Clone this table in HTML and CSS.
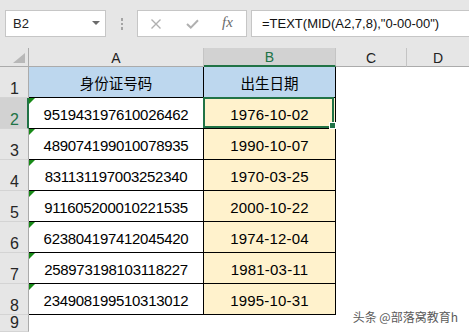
FILE: index.html
```html
<!DOCTYPE html>
<html lang="zh-CN">
<head>
<meta charset="utf-8">
<title>Excel TEXT MID</title>
<link rel="stylesheet" href="styles.css">
</head>
<body>
<div class="app">
  <div class="toolbar">
    <div class="namebox"><span class="ref">B2</span><span class="caret"></span></div>
    <div class="grip"><i></i><i></i><i></i></div>
    <div class="fxbox">
      <svg class="ico-x" width="12" height="10" viewBox="0 0 12 10"><path d="M1.5 0.5 L10.5 9.5 M10.5 0.5 L1.5 9.5" stroke="#b0b0b0" stroke-width="1.4" fill="none"/></svg>
      <svg class="ico-ok" width="13" height="10" viewBox="0 0 13 10"><path d="M1 5 L4.8 8.6 L12 1.2" stroke="#b0b0b0" stroke-width="2" fill="none"/></svg>
      <span class="fx">fx</span>
    </div>
    <div class="formula">=TEXT(MID(A2,7,8),"0-00-00")</div>
  </div>

  <div class="sheet">
    <div class="corner"><svg width="12" height="10" viewBox="0 0 12 10"><polygon points="12,0 12,10 0,10" fill="#b8b8b8"/></svg></div>
    <div class="colhead">A</div>
    <div class="colhead sel">B</div>
    <div class="colhead">C</div>
    <div class="colhead last">D</div>

    <div class="rowhead">1</div>
    <div class="cell title">身份证号码</div>
    <div class="cell title">出生日期</div>
    <div class="blank"></div><div class="blank"></div>

    <div class="rowhead sel">2</div>
    <div class="cell id flag">951943197610026462</div>
    <div class="cell date active">1976-10-02<span class="selbox"><span class="handle"></span></span></div>
    <div class="blank"></div><div class="blank"></div>

    <div class="rowhead">3</div>
    <div class="cell id flag">489074199010078935</div>
    <div class="cell date">1990-10-07</div>
    <div class="blank"></div><div class="blank"></div>

    <div class="rowhead">4</div>
    <div class="cell id flag">831131197003252340</div>
    <div class="cell date">1970-03-25</div>
    <div class="blank"></div><div class="blank"></div>

    <div class="rowhead">5</div>
    <div class="cell id flag">911605200010221535</div>
    <div class="cell date">2000-10-22</div>
    <div class="blank"></div><div class="blank"></div>

    <div class="rowhead">6</div>
    <div class="cell id flag">623804197412045420</div>
    <div class="cell date">1974-12-04</div>
    <div class="blank"></div><div class="blank"></div>

    <div class="rowhead">7</div>
    <div class="cell id flag">258973198103118227</div>
    <div class="cell date">1981-03-11</div>
    <div class="blank"></div><div class="blank"></div>

    <div class="rowhead">8</div>
    <div class="cell id flag">234908199510313012</div>
    <div class="cell date">1995-10-31</div>
    <div class="blank"></div><div class="blank"></div>

    <div class="rowhead">9</div>
    <div class="blank"></div><div class="blank"></div><div class="blank"></div><div class="blank"></div>
  </div>

  <div class="watermark">头条 @部落窝教育h</div>
</div>
</body>
</html>
```

FILE: styles.css
```css
* { box-sizing: border-box; }
html, body { margin: 0; padding: 0; background: #fff; }
body { width: 469px; height: 332px; overflow: hidden; font-family: "Liberation Sans", Arial, "Noto Sans CJK SC", sans-serif; }

.app { position: relative; width: 469px; height: 332px; display: flex; flex-direction: column; }

.toolbar {
  height: 48px;
  flex: none;
  background: #e6e6e6;
  display: flex;
  align-items: flex-start;
  padding: 10px 0 0 5px;
}
.namebox {
  width: 101px; height: 27px;
  background: #fff;
  border: 1px solid #c6c6c6;
  display: flex; align-items: center; justify-content: space-between;
  padding: 0 5px 0 7px;
}
.ref { font-size: 13px; color: #222; line-height: 25px; }
.caret { width: 0; height: 0; border-left: 4px solid transparent; border-right: 4px solid transparent; border-top: 4px solid #6b6b6b; margin-top: -2px; }

.grip { width: 31px; height: 27px; display: flex; flex-direction: column; align-items: center; padding-top: 8px; gap: 2px; }
.grip i { display: block; width: 2px; height: 2.5px; background: #a4a4a4; }

.fxbox {
  width: 110px; height: 27px;
  background: #fff;
  border: 1px solid #c6c6c6;
  display: flex; align-items: center;
  padding-left: 12px;
}
.ico-x { flex: none; }
.ico-ok { flex: none; margin-left: 24px; margin-top: 1px; }
.fx { margin-left: 23px; font-family: "Liberation Serif", "Times New Roman", serif; font-style: italic; font-size: 15px; color: #6a6a6a; line-height: 25px; margin-top: -2px; }

.formula {
  flex: 1;
  margin-left: 4px;
  height: 27px;
  background: #fff;
  border: 1px solid #c6c6c6;
  border-right: none;
  padding-left: 10px;
  font-size: 13px; line-height: 25px; color: #111;
  white-space: nowrap;
}

.sheet {
  flex: 1;
  display: grid;
  grid-template-columns: 29px 175px 132px 71px 1fr;
  grid-template-rows: 19px repeat(8, 31px) 1fr;
  overflow: hidden;
}

.corner {
  background: #e6e6e6;
  border-right: 1px solid #ababab;
  border-bottom: 1px solid #ababab;
  display: flex; align-items: flex-end; justify-content: flex-end;
  padding: 0 3px 3px 0;
}
.corner svg { display: block; }

.colhead {
  background: #e6e6e6;
  border-right: 1px solid #c4c4c4;
  border-bottom: 1px solid #ababab;
  display: flex; align-items: flex-end; justify-content: center;
  font-size: 14px; line-height: 15px; color: #222;
}
.colhead.sel { background: #d2d2d2; color: #217346; border-bottom: 2px solid #217346; }
.colhead.last { border-right: none; }

.rowhead {
  background: #e6e6e6;
  border-right: 1px solid #ababab;
  border-bottom: 1px solid #d4d4d4;
  display: flex; align-items: flex-end; justify-content: center;
  font-size: 16px; line-height: 16px; color: #262626;
  padding-left: 1px;
}
.rowhead.sel { background: #d2d2d2; color: #217346; border-right: 2px solid #217346; padding-left: 2px; }

.cell {
  position: relative;
  border-right: 1px solid #000;
  border-bottom: 1px solid #000;
  display: flex; align-items: center; justify-content: center;
  color: #000;
  font-size: 15px;
  padding-top: 2px;
  white-space: nowrap;
}
.cell.title {
  background: #bdd7ee;
  font-family: "Noto Sans CJK SC", "Liberation Sans", sans-serif;
  font-size: 14.5px;
  padding-top: 1px;
}
.cell.id { background: #fff; letter-spacing: -0.3px; }
.cell.date { background: #fff2cc; letter-spacing: 0.2px; }

.cell.flag::before {
  content: "";
  position: absolute;
  left: 0; top: 0;
  width: 0; height: 0;
  border-top: 6px solid #178a17;
  border-right: 6px solid transparent;
}

.selbox {
  position: absolute;
  left: -1px; top: -1px; right: 1px; bottom: 0;
  border: 2px solid #217346;
}
.handle {
  position: absolute;
  right: -4px; bottom: -3px;
  width: 7px; height: 7px;
  background: #217346;
  border: 1px solid #fff;
}

.blank { background: #fff; }

.watermark {
  position: absolute;
  right: 11px; top: 309px;
  font-family: "Noto Sans CJK SC", sans-serif;
  font-size: 12px;
  line-height: 16px;
  color: #5a5a5a;
  white-space: nowrap;
}
```
